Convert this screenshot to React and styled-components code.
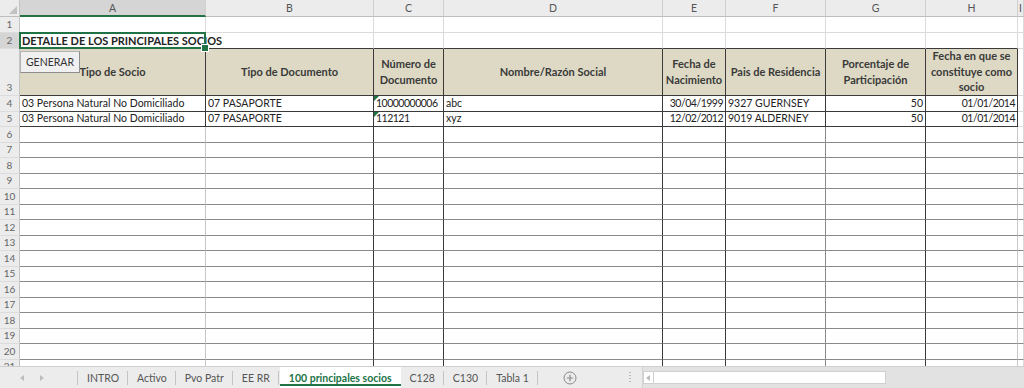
import React from "react";
import styled, { createGlobalStyle, css } from "styled-components";

const GREEN = "#217346";
const DARK = "#3a3a3a";
const MID = "#8a8a8a";
const LIGHT = "#c9c9c9";
const GRID = "#dadada";
const TAN = "#ddd9c4";

const columns = [
  { key: "A", width: 186, title: "Tipo de Socio", low: LIGHT },
  { key: "B", width: 168, title: "Tipo de Documento", low: DARK },
  { key: "C", width: 70, title: "Número de\nDocumento", low: DARK, flag: true, tight: true },
  { key: "D", width: 219, title: "Nombre/Razón Social", low: DARK },
  { key: "E", width: 63, title: "Fecha de\nNacimiento", align: "right", low: DARK, tight: true },
  { key: "F", width: 100, title: "Pais de Residencia", low: MID },
  { key: "G", width: 100, title: "Porcentaje de\nParticipación", align: "right", low: DARK },
  { key: "H", width: 92, title: "Fecha en que se\nconstituye como\nsocio", align: "right", low: LIGHT, tight: true },
];

const rows = [
  ["03 Persona Natural No Domiciliado", "07 PASAPORTE", "10000000006", "abc", "30/04/1999", "9327 GUERNSEY", "50", "01/01/2014"],
  ["03 Persona Natural No Domiciliado", "07 PASAPORTE", "112121", "xyz", "12/02/2012", "9019 ALDERNEY", "50", "01/01/2014"],
];

const tabs = ["INTRO", "Activo", "Pvo Patr", "EE RR", "100 principales socios", "C128", "C130", "Tabla 1"];
const activeTab = 4;

const GlobalStyle = createGlobalStyle`
  html, body { margin: 0; padding: 0; background: #fff; }
  body { font-family: Lato, "Open Sans", sans-serif; }
  * { box-sizing: border-box; }
`;

const Window = styled.div`
  width: 1024px;
  height: 388px;
  display: flex;
  flex-direction: column;
  overflow: hidden;
  background: #fff;
`;

const Sheet = styled.div`
  position: relative;
  flex: 1;
  overflow: hidden;
  background: #fff;
`;

const Grid = styled.div`
  display: grid;
  grid-template-columns: 20px ${columns.map((c) => c.width + "px").join(" ")} 1fr;
  grid-template-rows: 17px 16px 16px 47px repeat(17, 15.5px);
`;

const Corner = styled.div`
  position: relative;
  background: #ececec;
  border-right: 1px solid #c4c4c4;
  border-bottom: 1px solid #bdbdbd;
  &::after {
    content: "";
    position: absolute;
    right: 2px;
    bottom: 2px;
    border-left: 8px solid transparent;
    border-bottom: 8px solid #c2c2c2;
  }
`;

const ColHead = styled.div`
  display: flex;
  align-items: center;
  justify-content: center;
  font-size: 10.5px;
  color: #555;
  background: ${(p) => (p.$active ? "#d5d5d5" : "#ececec")};
  border-right: 1px solid #d0d0d0;
  border-bottom: ${(p) => (p.$active ? `2px solid ${GREEN}` : "1px solid #bdbdbd")};
`;

const RowHead = styled.div`
  display: flex;
  align-items: flex-end;
  justify-content: center;
  padding-bottom: 1px;
  font-size: 10px;
  line-height: 13px;
  color: #666;
  background: ${(p) => (p.$active ? "#d5d5d5" : "#ececec")};
  border-right: 1px solid #c4c4c4;
  border-bottom: 1px solid #dcdcdc;
`;

const Cell = styled.div`
  position: relative;
  display: flex;
  align-items: ${(p) => (p.$head ? "center" : "flex-end")};
  justify-content: ${(p) =>
    p.$align === "right" ? "flex-end" : p.$head ? "center" : "flex-start"};
  text-align: ${(p) => (p.$head ? "center" : p.$align || "left")};
  padding: 0 2px 1px 2px;
  min-width: 0;
  background: ${(p) => p.$bg || "transparent"};
  border-right: 1px solid ${(p) => p.$rc || GRID};
  border-bottom: 1px solid ${(p) => p.$bc || GRID};
  font-size: ${(p) => (p.$head || p.$title ? "11px" : "10.5px")};
  letter-spacing: ${(p) => (p.$tight ? "-0.5px" : "0")};
  line-height: ${(p) => (p.$head ? "15.5px" : "13px")};
  font-weight: ${(p) => (p.$bold ? 700 : 400)};
  color: ${(p) => (p.$head ? "#3a3a3a" : "#222")};
  white-space: ${(p) => (p.$head ? "pre-line" : "nowrap")};
  ${(p) =>
    p.$flag &&
    css`
      &::before {
        content: "";
        position: absolute;
        top: 0;
        left: 0;
        border-top: 5px solid ${GREEN};
        border-right: 5px solid transparent;
      }
    `}
  ${(p) =>
    p.$selected &&
    css`
      z-index: 2;
      &::after {
        content: "";
        position: absolute;
        top: -1px;
        left: -1px;
        right: -1px;
        bottom: -1px;
        border: 2px solid ${GREEN};
      }
      &::before {
        content: "";
        position: absolute;
        right: -4px;
        bottom: -4px;
        width: 6px;
        height: 6px;
        background: ${GREEN};
        border: 1px solid #fff;
        z-index: 3;
      }
    `}
`;

const MacroButton = styled.button`
  position: absolute;
  left: 20px;
  top: 51px;
  width: 60px;
  height: 22px;
  padding: 0;
  font-family: Lato, sans-serif;
  font-size: 10.5px;
  color: #333;
  background: #f0f0f0;
  border: 1px solid #b4b4b4;
  border-right-color: #8e8e8e;
  border-bottom-color: #8e8e8e;
  z-index: 4;
`;

const TabBar = styled.div`
  height: 22px;
  flex-shrink: 0;
  display: flex;
  align-items: stretch;
  background: #ececec;
  border-top: 1px solid #cfcfcf;
  font-size: 10.5px;
  color: #555;
`;

const NavArrows = styled.div`
  width: 78px;
  display: flex;
  align-items: center;
  gap: 16px;
  padding-left: 20px;
  position: relative;
  &::after {
    content: "";
    position: absolute;
    right: 0;
    top: 4px;
    height: 14px;
    width: 1px;
    background: #c4c4c4;
  }
`;

const Arrow = styled.span`
  width: 0;
  height: 0;
  border-top: 3px solid transparent;
  border-bottom: 3px solid transparent;
  ${(p) =>
    p.$dir === "left"
      ? css`border-right: 4px solid #bdbdbd;`
      : css`border-left: 4px solid #bdbdbd;`}
`;

const Tab = styled.div`
  position: relative;
  display: flex;
  align-items: center;
  padding: 0 9px;
  background: ${(p) => (p.$active ? "#fff" : "transparent")};
  color: ${(p) => (p.$active ? GREEN : "#555")};
  font-weight: ${(p) => (p.$active ? 700 : 400)};
  white-space: nowrap;
  ${(p) =>
    p.$active &&
    css`
      margin-left: 1px;
      &::before {
        content: "";
        position: absolute;
        left: 0;
        right: 0;
        bottom: 2px;
        height: 2px;
        background: ${GREEN};
      }
    `}
  ${(p) =>
    p.$sep &&
    css`
      &::after {
        content: "";
        position: absolute;
        right: 0;
        top: 4px;
        height: 14px;
        width: 1px;
        background: #c4c4c4;
      }
    `}
`;

const AddSheet = styled.div`
  display: flex;
  align-items: center;
  margin-left: 25px;
`;

const Splitter = styled.div`
  width: 2px;
  margin: 4px 0 4px 52px;
  background-image: radial-gradient(circle, #b9b9b9 0.8px, transparent 1px);
  background-size: 2px 3px;
`;

const HScroll = styled.div`
  flex: 1;
  display: flex;
  align-items: center;
  margin-left: 11px;
  background: #e2e2e2;
  border-left: 1px solid #d4d4d4;
`;

const ScrollButton = styled.div`
  width: 11px;
  height: 13px;
  display: flex;
  align-items: center;
  justify-content: center;
  background: #fff;
  border: 1px solid #d0d0d0;
`;

const Thumb = styled.div`
  width: 232px;
  height: 13px;
  background: #fff;
  border: 1px solid #cfcfcf;
  border-left: none;
`;

function bodyBorders(rowIndex, col) {
  // rowIndex: 1-based spreadsheet row
  if (rowIndex >= 3 && rowIndex <= 5) return { rc: DARK, bc: DARK };
  if (rowIndex === 2) return { rc: GRID, bc: DARK };
  if (rowIndex >= 6) return { rc: col.low, bc: MID };
  return { rc: GRID, bc: GRID };
}

function App() {
  const cells = [];

  cells.push(<Corner key="corner" />);
  columns.forEach((c) =>
    cells.push(
      <ColHead key={"h" + c.key} $active={c.key === "A"}>
        {c.key}
      </ColHead>
    )
  );
  cells.push(<ColHead key="hI">I</ColHead>);

  for (let r = 1; r <= 21; r++) {
    cells.push(
      <RowHead key={"r" + r} $active={r === 2}>
        {r}
      </RowHead>
    );
    columns.forEach((c, ci) => {
      const b = bodyBorders(r, c);
      const key = c.key + r;
      if (r === 2 && ci === 0) {
        cells.push(
          <Cell key={key} $rc={b.rc} $bc={b.bc} $bold $title $selected>
            DETALLE DE LOS PRINCIPALES SOCIOS
          </Cell>
        );
      } else if (r === 3) {
        cells.push(
          <Cell key={key} $rc={b.rc} $bc={b.bc} $bg={TAN} $bold $head>
            {c.title}
          </Cell>
        );
      } else if (r === 4 || r === 5) {
        cells.push(
          <Cell
            key={key}
            $rc={b.rc}
            $bc={b.bc}
            $align={c.align}
            $flag={c.flag}
            $tight={c.tight}
          >
            {rows[r - 4][ci]}
          </Cell>
        );
      } else {
        cells.push(<Cell key={key} $rc={b.rc} $bc={b.bc} />);
      }
    });
    cells.push(<Cell key={"I" + r} $rc={GRID} $bc={r >= 6 ? MID : GRID} />);
  }

  return (
    <Window>
      <GlobalStyle />
      <Sheet>
        <Grid>{cells}</Grid>
        <MacroButton>GENERAR</MacroButton>
      </Sheet>
      <TabBar>
        <NavArrows>
          <Arrow $dir="left" />
          <Arrow $dir="right" />
        </NavArrows>
        {tabs.map((t, i) => (
          <Tab key={t} $active={i === activeTab} $sep={i !== activeTab}>
            {t}
          </Tab>
        ))}
        <AddSheet>
          <svg width="14" height="14" viewBox="0 0 14 14">
            <circle cx="7" cy="7" r="6" fill="none" stroke="#8a8a8a" strokeWidth="1" />
            <path d="M7 3.8v6.4M3.8 7h6.4" stroke="#8a8a8a" strokeWidth="1.2" />
          </svg>
        </AddSheet>
        <Splitter />
        <HScroll>
          <ScrollButton>
            <Arrow $dir="left" />
          </ScrollButton>
          <Thumb />
        </HScroll>
      </TabBar>
    </Window>
  );
}

export default App;
